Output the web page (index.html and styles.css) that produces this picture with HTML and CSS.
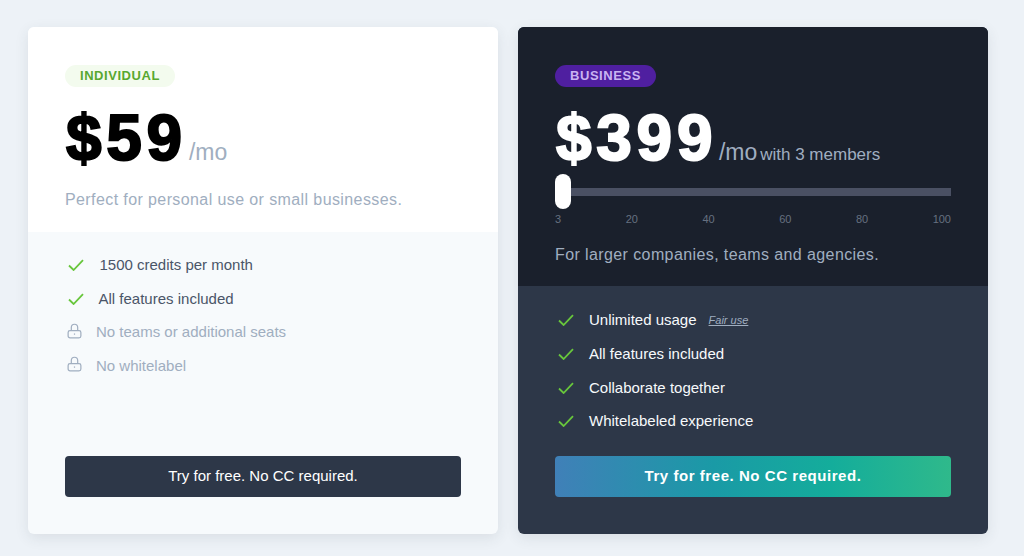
FILE: index.html
```html
<!DOCTYPE html>
<html lang="en">
<head>
<meta charset="utf-8">
<title>Pricing</title>
<link rel="stylesheet" href="styles.css">
</head>
<body>
<main class="plans">
  <section class="card card-light">
    <div class="head">
      <span class="badge badge-green">INDIVIDUAL</span>
      <div class="price-row"><span class="price">$59</span><span class="per">/mo</span></div>
      <p class="desc desc-light">Perfect for personal use or small businesses.</p>
    </div>
    <div class="body">
      <ul class="features">
        <li class="inc"><svg class="check" viewBox="0 0 16 12"><path d="M1 6.5 5.6 11 15 1.2"/></svg><span class="t1">1500 credits per month</span></li>
        <li class="inc"><svg class="check" viewBox="0 0 16 12"><path d="M1 6.5 5.6 11 15 1.2"/></svg><span class="t2">All features included</span></li>
        <li class="off"><svg class="lock" viewBox="0 0 16 16"><path d="M4.6 7.5V4.2a3.4 3.4 0 0 1 6.8 0v3.3"/><rect x="1.2" y="7.5" width="13.6" height="7.8" rx="2"/><path d="M8 10.6v1.4"/></svg><span>No teams or additional seats</span></li>
        <li class="off"><svg class="lock" viewBox="0 0 16 16"><path d="M4.6 7.5V4.2a3.4 3.4 0 0 1 6.8 0v3.3"/><rect x="1.2" y="7.5" width="13.6" height="7.8" rx="2"/><path d="M8 10.6v1.4"/></svg><span>No whitelabel</span></li>
      </ul>
      <a class="btn btn-dark">Try for free. No CC required.</a>
    </div>
  </section>
  <section class="card card-dark">
    <div class="head">
      <span class="badge badge-purple">BUSINESS</span>
      <div class="price-row"><span class="price">$399</span><span class="per per-dark">/mo</span><span class="members">with 3 members</span></div>
      <div class="slider"><span class="track"></span><span class="thumb"></span></div>
      <div class="ticks"><span>3</span><span>20</span><span>40</span><span>60</span><span>80</span><span>100</span></div>
      <p class="desc desc-dark">For larger companies, teams and agencies.</p>
    </div>
    <div class="body">
      <ul class="features">
        <li class="inc"><svg class="check" viewBox="0 0 16 12"><path d="M1 6.5 5.6 11 15 1.2"/></svg><span>Unlimited usage</span><a class="fair">Fair use</a></li>
        <li class="inc"><svg class="check" viewBox="0 0 16 12"><path d="M1 6.5 5.6 11 15 1.2"/></svg><span>All features included</span></li>
        <li class="inc"><svg class="check" viewBox="0 0 16 12"><path d="M1 6.5 5.6 11 15 1.2"/></svg><span>Collaborate together</span></li>
        <li class="inc"><svg class="check" viewBox="0 0 16 12"><path d="M1 6.5 5.6 11 15 1.2"/></svg><span>Whitelabeled experience</span></li>
      </ul>
      <a class="btn btn-grad">Try for free. No CC required.</a>
    </div>
  </section>
</main>
</body>
</html>
```
FILE: styles.css
```css
* { box-sizing: border-box; }
html, body { margin: 0; height: 556px; overflow: hidden; }
body {
  background: #edf2f7;
  font-family: "Liberation Sans", Arial, sans-serif;
  padding: 27px 36px 22px 28px;
}
.plans { display: grid; grid-template-columns: 470px 470px; gap: 20px; height: 507px; }
.card {
  display: flex; flex-direction: column; border-radius: 6px; overflow: hidden;
  box-shadow: 0 4px 14px rgba(45, 55, 72, .10);
}
.card-light { background: #f7fafc; }
.card-dark { background: #2d3748; }
.card-light .head { background: #fff; height: 205px; }
.card-dark .head { background: #1a202c; height: 259px; }
.head { padding: 38px 37px 0; }
.badge {
  display: block; width: max-content; height: 22px; padding: 0 15px;
  border-radius: 11px; font-size: 13px; font-weight: 700; line-height: 22px; letter-spacing: .55px;
}
.badge-green { background: #f3fbee; color: #58a830; }
.badge-purple { background: #4f1fa0; color: #c9b4f2; }
.price-row { display: flex; align-items: baseline; margin-top: 18px; height: 66px; }
.price {
  font-size: 64px; line-height: 66px; font-weight: 700; letter-spacing: 4.7px;
  -webkit-text-stroke: 2px currentColor;
}
.card-light .price { color: #000; margin-left: 1px; }
.card-dark .price { color: #fff; margin-left: 1px; }
.per { margin-left: 2px; font-size: 23px; color: #a0aec0; }
.per-dark { margin-left: 1.7px; }
.members { margin-left: 3px; font-size: 17px; color: #a0aec0; }
.desc { margin: 0; font-size: 16px; line-height: 24px; letter-spacing: .4px; }
.desc-light { margin-top: 17px; color: #a0aec0; }
.desc-dark { margin-top: 17px; color: #a0aec0; }
.slider { position: relative; height: 35px; margin-top: 3px; display: flex; align-items: center; }
.track { display: block; width: 100%; height: 8px; background: #4a5063; }
.thumb { position: absolute; left: 0; top: 0; width: 16px; height: 35px; border-radius: 8px; background: #fff; }
.ticks { display: flex; justify-content: space-between; margin-top: 4px; font-size: 11px; line-height: 13px; color: #667080; }
.body { flex: 1; display: flex; flex-direction: column; padding: 20.4px 37px 37px; }
.card-dark .body { padding-top: 21.8px; }
.features { list-style: none; margin: 0; padding: 0; display: flex; flex-direction: column; gap: 9.7px; }
.features li { display: flex; align-items: center; height: 24px; font-size: 15px; }
.inc .check { width: 16px; height: 12px; margin: 1px 15px 0 3px; flex: none; fill: none; stroke: #68c63c; stroke-width: 1.8; }
.card-light .inc .check { margin-right: 14.5px; }
.lock { width: 15px; height: 16px; margin: 0 14px 2px 2px; flex: none; fill: none; stroke: #a0aec0; stroke-width: 1.3; }
.off { color: #a0aec0; }
.card-light .inc { color: #4a5568; }
.card-dark .inc { color: #f7fafc; }
.t1 { margin-left: 1px; }
.fair { margin-left: 12px; font-size: 11px; font-style: italic; color: #a0aec0; text-decoration: underline; }
.btn {
  display: block; margin-top: auto; height: 41px; border-radius: 4px;
  text-align: center; line-height: 40px; font-size: 15px;
}
.btn-dark { background: #2d3748; color: #fff; }
.btn-grad {
  background: linear-gradient(90deg, #4080b8 0%, #1a9aa6 40%, #14ad9b 70%, #2fb98b 100%);
  color: #fff; font-weight: 700; letter-spacing: .55px;
}
```
